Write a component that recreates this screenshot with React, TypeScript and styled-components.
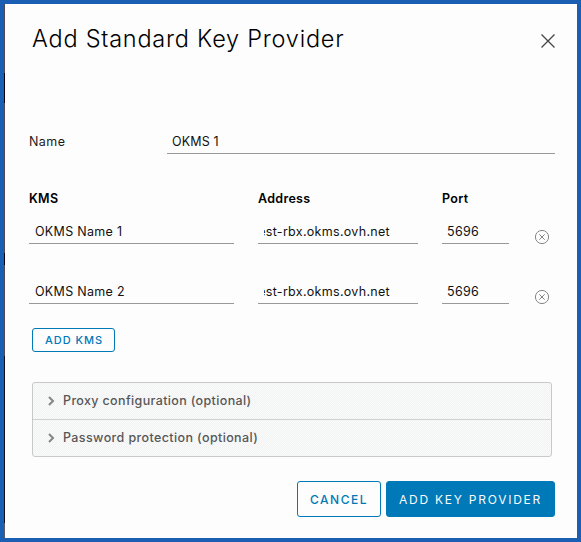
import React from 'react';
import styled, { createGlobalStyle } from 'styled-components';

const GlobalStyle = createGlobalStyle`
  *, *::before, *::after { box-sizing: border-box; }
  body { margin: 0; background: #1b5fb4; font-family: Inter, "Open Sans", sans-serif; }
  button { font-family: inherit; margin: 0; }
`;

const Frame = styled.div`
  width: 581px;
  height: 542px;
  padding: 4px;
  background: #1b5fb4;
`;

const Dialog = styled.section`
  width: 573px;
  height: 534px;
  display: flex;
  flex-direction: column;
  padding: 0 22px 0 25px;
  background:
    linear-gradient(#4a4a52 0 69px, #050510 69px 99px, #4a4a52 99px 249px, #050510 249px 261px, #4a4a52 261px 352px, #101018 352px 519px, #5c5c60 519px) 0 0 / 1px 100% no-repeat,
    #fdfdfd;
`;

const Header = styled.header`
  display: flex;
  justify-content: space-between;
  height: 120px;
  padding: 20px 0 0 3px;
`;

const Title = styled.h1`
  margin: 0;
  font-size: 23.5px;
  line-height: 30px;
  font-weight: 300;
  letter-spacing: 0.76px;
  color: #000;
  white-space: nowrap;
`;

const CloseButton = styled.button`
  width: 14px;
  height: 14px;
  margin-top: 10px;
  padding: 0;
  border: 0;
  background: none;
  svg { display: block; }
`;

const NameRow = styled.div`
  display: grid;
  grid-template-columns: 138px 1fr;
  height: 30px;
`;

const Label = styled.label`
  padding-top: 8px;
  font-size: 12.5px;
  line-height: 20px;
  letter-spacing: 0.45px;
  color: #1a1a1a;
`;

const Field = styled.div<{ $textWidth?: number; $spacing?: number }>`
  display: flex;
  height: 26px;
  padding: 4px 6px 0;
  border-bottom: 1px solid #999;
  font-size: 12.5px;
  line-height: 20px;
  letter-spacing: ${p => p.$spacing ?? 0.3}px;
  color: #111;
  white-space: nowrap;
  span {
    display: flex;
    justify-content: flex-end;
    overflow: hidden;
    width: ${p => (p.$textWidth ? `${p.$textWidth}px` : 'auto')};
  }
`;

const NameField = styled(Field)`
  height: 30px;
  padding: 8px 5px 0;
`;

const Table = styled.div`
  display: grid;
  grid-template-columns: 205px 160px 67px 16px;
  column-gap: 24px;
  margin-top: 34px;
`;

const HeadCell = styled.div`
  height: 30px;
  padding-top: 1px;
  font-size: 12.5px;
  line-height: 20px;
  font-weight: 600;
  letter-spacing: 0.3px;
  color: #000;
`;

const Row = styled.div`
  display: grid;
  grid-column: 1 / -1;
  grid-template-columns: subgrid;
  height: 60px;
`;

const PortField = styled(Field)`
  padding-left: 5px;
`;

const RemoveButton = styled.button`
  width: 16px;
  height: 16px;
  margin: 11px 0 0 1px;
  padding: 0;
  border: 0;
  background: none;
  svg { display: block; }
`;

const AddKms = styled.button`
  flex: none;
  width: 83px;
  height: 24px;
  margin: -10px 0 0 3px;
  padding: 0 0 0 1px;
  border: 1px solid #0079b8;
  border-radius: 3px;
  background: transparent;
  color: #0079b8;
  font-size: 11px;
  line-height: 22px;
  font-weight: 450;
  letter-spacing: 0.95px;
`;

const Accordion = styled.div`
  flex: none;
  width: 520px;
  height: 75px;
  margin: 30px 0 0 3px;
  border: 1px solid #c9c9c9;
  border-radius: 3px;
  background: repeating-conic-gradient(#f1f3f3 0 25%, #fbfbfb 0 50%) 0 0 / 2px 2px;
`;

const Panel = styled.div<{ $spacing: number }>`
  display: flex;
  align-items: center;
  height: 36px;
  padding: 0 0 0 15px;
  gap: 8px;
  font-size: 12.5px;
  line-height: 20px;
  font-weight: 450;
  letter-spacing: ${p => p.$spacing}px;
  color: #575757;
  & + & { height: 37px; border-top: 1px solid #d0d0d0; }
`;

const Footer = styled.footer`
  display: flex;
  justify-content: flex-end;
  gap: 5px;
  margin-top: 24px;
`;

const Button = styled.button<{ $primary?: boolean }>`
  width: ${p => (p.$primary ? 169 : 84)}px;
  height: 36px;
  padding: 1px 0 0;
  border: 1px solid #0079b8;
  border-radius: 3px;
  background: ${p => (p.$primary ? '#0079b8' : 'transparent')};
  color: ${p => (p.$primary ? '#fafafa' : '#0079b8')};
  font-size: 12px;
  font-weight: ${p => (p.$primary ? 400 : 450)};
  letter-spacing: ${p => (p.$primary ? 1.75 : 1.5)}px;
  white-space: nowrap;
`;

const Caret = () => (
  <svg width="7" height="10" viewBox="0 0 7 10" fill="none" stroke="#858585" strokeWidth="2">
    <path d="M1 1l4 4-4 4" />
  </svg>
);

const servers = [
  { name: 'OKMS Name 1', address: 'est-rbx.okms.ovh.net', port: '5696' },
  { name: 'OKMS Name 2', address: 'est-rbx.okms.ovh.net', port: '5696' },
];

export default function App() {
  return (
    <>
      <GlobalStyle />
      <Frame>
        <Dialog role="dialog">
          <Header>
            <Title>Add Standard Key Provider</Title>
            <CloseButton aria-label="Close">
              <svg width="14" height="14" viewBox="0 0 14 14" stroke="#444" strokeWidth="1.3">
                <path d="M.5 .5l13 13M13.5 .5l-13 13" />
              </svg>
            </CloseButton>
          </Header>
          <NameRow>
            <Label>Name</Label>
            <NameField $spacing={0.15}>OKMS 1</NameField>
          </NameRow>
          <Table>
            <HeadCell>KMS</HeadCell>
            <HeadCell>Address</HeadCell>
            <HeadCell>Port</HeadCell>
            <HeadCell />
            {servers.map(server => (
              <Row key={server.name}>
                <Field>{server.name}</Field>
                <Field $textWidth={126}><span>{server.address}</span></Field>
                <PortField>{server.port}</PortField>
                <RemoveButton aria-label="Remove">
                  <svg width="16" height="16" viewBox="0 0 16 16" fill="none" stroke="#858585">
                    <circle cx="8" cy="8" r="6.6" />
                    <path d="M5.3 5.3l5.4 5.4M10.7 5.3l-5.4 5.4" />
                  </svg>
                </RemoveButton>
              </Row>
            ))}
          </Table>
          <AddKms>ADD KMS</AddKms>
          <Accordion>
            <Panel $spacing={0.36}><Caret />Proxy configuration (optional)</Panel>
            <Panel $spacing={0.39}><Caret />Password protection (optional)</Panel>
          </Accordion>
          <Footer>
            <Button>CANCEL</Button>
            <Button $primary>ADD KEY PROVIDER</Button>
          </Footer>
        </Dialog>
      </Frame>
    </>
  );
}
